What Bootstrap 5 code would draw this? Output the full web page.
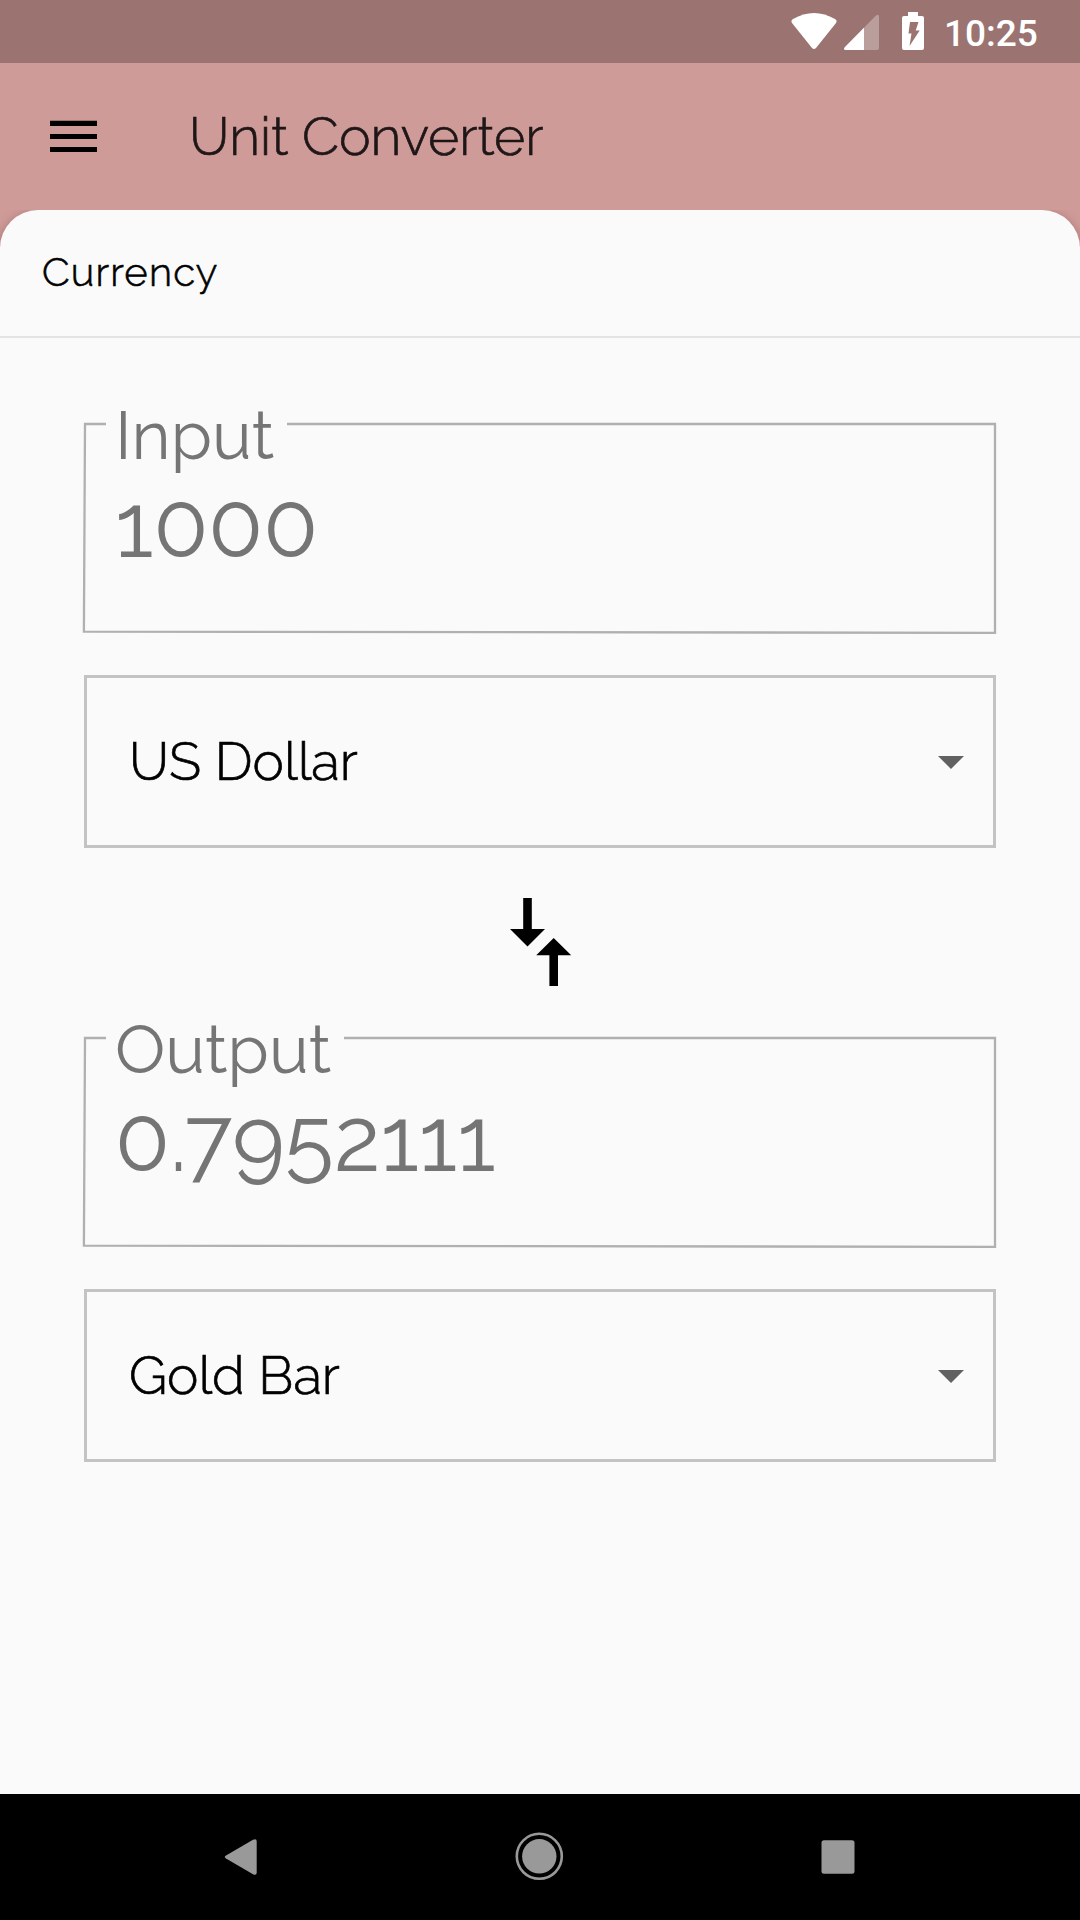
<!DOCTYPE html>
<html lang="en">
<head>
<meta charset="utf-8">
<meta name="viewport" content="width=device-width, initial-scale=1">
<title>Unit Converter</title>
<link href="https://cdn.jsdelivr.net/npm/bootstrap@5.3.0/dist/css/bootstrap.min.css" rel="stylesheet">
<style>
body{width:1080px;height:1920px;overflow:hidden;background:#fafafa;font-family:Raleway,Lato,sans-serif;color:#000}
svg{display:block;flex:none}
.statusbar{height:63px;background:#9b7472;color:#fff;padding:0 42px 0 791px}
.clock{font:500 37px/66px Roboto,sans-serif;margin-left:19px;padding-top:4px}
.appbar{height:184px;background:#cf9b99;padding:0 50px}
.appbar-row{height:145px}
.apptitle{font-size:53.500px;font-weight:300;line-height:64px;padding-top:2px;color:#1f1717;margin-left:92px;-webkit-text-stroke:.7px}
.sheet{margin-top:-37px;background:#fafafa;border-radius:38px 38px 0 0;box-shadow:0 4px 12px rgba(60,10,10,.35);clip-path:inset(0)}
.category{height:128px;padding:35px 42px 0;border-bottom:2px solid #e4e4e4;font-size:40px;letter-spacing:1.200px;font-weight:300;line-height:54px;-webkit-text-stroke:.6px}
.converter{padding:84px 84px 0}
.field{height:212px;color:#757575;padding-left:31px;margin-bottom:41px}
.outline{left:-2px;top:0}
.fieldlabel{font-size:67px;line-height:80px;height:80px;margin-top:-26px}
.value{font-size:89.700px;line-height:90px;height:90px;margin-top:5px}
.picker{height:173px;border:3px solid #c3c3c3;border-radius:0;padding:0 29px 0 42px;font-size:53px;font-weight:300;-webkit-text-stroke:.7px}
.picker svg{margin-top:2px}
.swap{padding:50px 0 50px 1px}
.navbar-keys{height:126px;background:#000}
</style>
</head>
<body class="d-flex flex-column">
<div class="statusbar d-flex align-items-center">
  <svg width="134" height="63" viewBox="791 0 134 63" fill="#fff">
    <path d="M793 19Q814 7 835 19Q837.500 20.500 836 23L816 48Q814 50 812 48L792 23Q790.500 20.500 793 19Z"/>
    <path d="M845 47L876 15.500Q879 13.500 879 17V48Q879 50 877 50H846Q842.500 50 845 47Z" opacity=".3"/>
    <path d="M845 47L864 27.700V50H846Q842.500 50 845 47Z"/>
    <path d="M908 12h10v4h4q2 0 2 2v30q0 2-2 2h-18q-2 0-2-2V18q0-2 2-2h4Z"/>
    <path fill="#9b7472" d="M910 22h8.500l-2.800 8.500h4L909.500 46l2-12.500H908.500Z"/>
  </svg>
  <span class="clock">10:25</span>
</div>
<header class="appbar">
  <div class="appbar-row d-flex align-items-center">
    <svg width="47" height="32" viewBox="0 0 47 32"><path d="M0 .8h47v5.200H0zM0 14h47v5H0zM0 27h47v5H0z"/></svg>
    <h1 class="apptitle mb-0">Unit Converter</h1>
  </div>
</header>
<main class="sheet flex-grow-1">
  <div class="category">Currency</div>
  <div class="converter">
    <section class="field position-relative d-flex flex-column">
      <svg class="outline position-absolute" width="918" height="214" viewBox="82 422 918 214" fill="none" stroke="#b0b0b0" stroke-width="2.300"><path d="M106 424H85L83.900 631.700L995 632.800V424H287"/></svg>
      <div class="fieldlabel">Input</div>
      <div class="value">1000</div>
    </section>
    <div class="picker d-flex align-items-center justify-content-between">
      <span>US Dollar</span>
      <svg width="26" height="13" viewBox="0 0 26 13"><path d="M0 0h26L13 13z" fill="#616161"/></svg>
    </div>
    <div class="swap d-flex justify-content-center">
      <svg width="62" height="88" viewBox="510 898 62 88"><path d="M523.200 898h8.600v31H545L527.500 946.500L510 929H523.200ZM553.700 938L571.200 955.300H558V986h-8.600V955.300H536.200Z"/></svg>
    </div>
    <section class="field position-relative d-flex flex-column">
      <svg class="outline position-absolute" width="918" height="214" viewBox="82 422 918 214" fill="none" stroke="#b0b0b0" stroke-width="2.300"><path d="M106 424H85L83.900 631.700L995 632.800V424H344"/></svg>
      <div class="fieldlabel">Output</div>
      <div class="value">0.7952111</div>
    </section>
    <div class="picker d-flex align-items-center justify-content-between">
      <span>Gold Bar</span>
      <svg width="26" height="13" viewBox="0 0 26 13"><path d="M0 0h26L13 13z" fill="#616161"/></svg>
    </div>
  </div>
</main>
<footer class="navbar-keys">
  <svg width="1080" height="126" viewBox="0 1794 1080 126" fill="#999">
    <path d="M226 1855.500L253 1839.800Q256.700 1838 256.700 1841.500V1872.500Q256.700 1876 253 1874.300L226 1858.500Q223.500 1857 226 1855.500Z"/>
    <circle cx="539.300" cy="1856.300" r="17.200"/><circle cx="539.300" cy="1856.300" r="22.500" fill="none" stroke="#999" stroke-width="2.600"/>
    <rect x="821.500" y="1840.300" width="33" height="33.500" rx="2.500"/>
  </svg>
</footer>
<script src="https://cdn.jsdelivr.net/npm/bootstrap@5.3.0/dist/js/bootstrap.bundle.min.js"></script>
</body>
</html>
